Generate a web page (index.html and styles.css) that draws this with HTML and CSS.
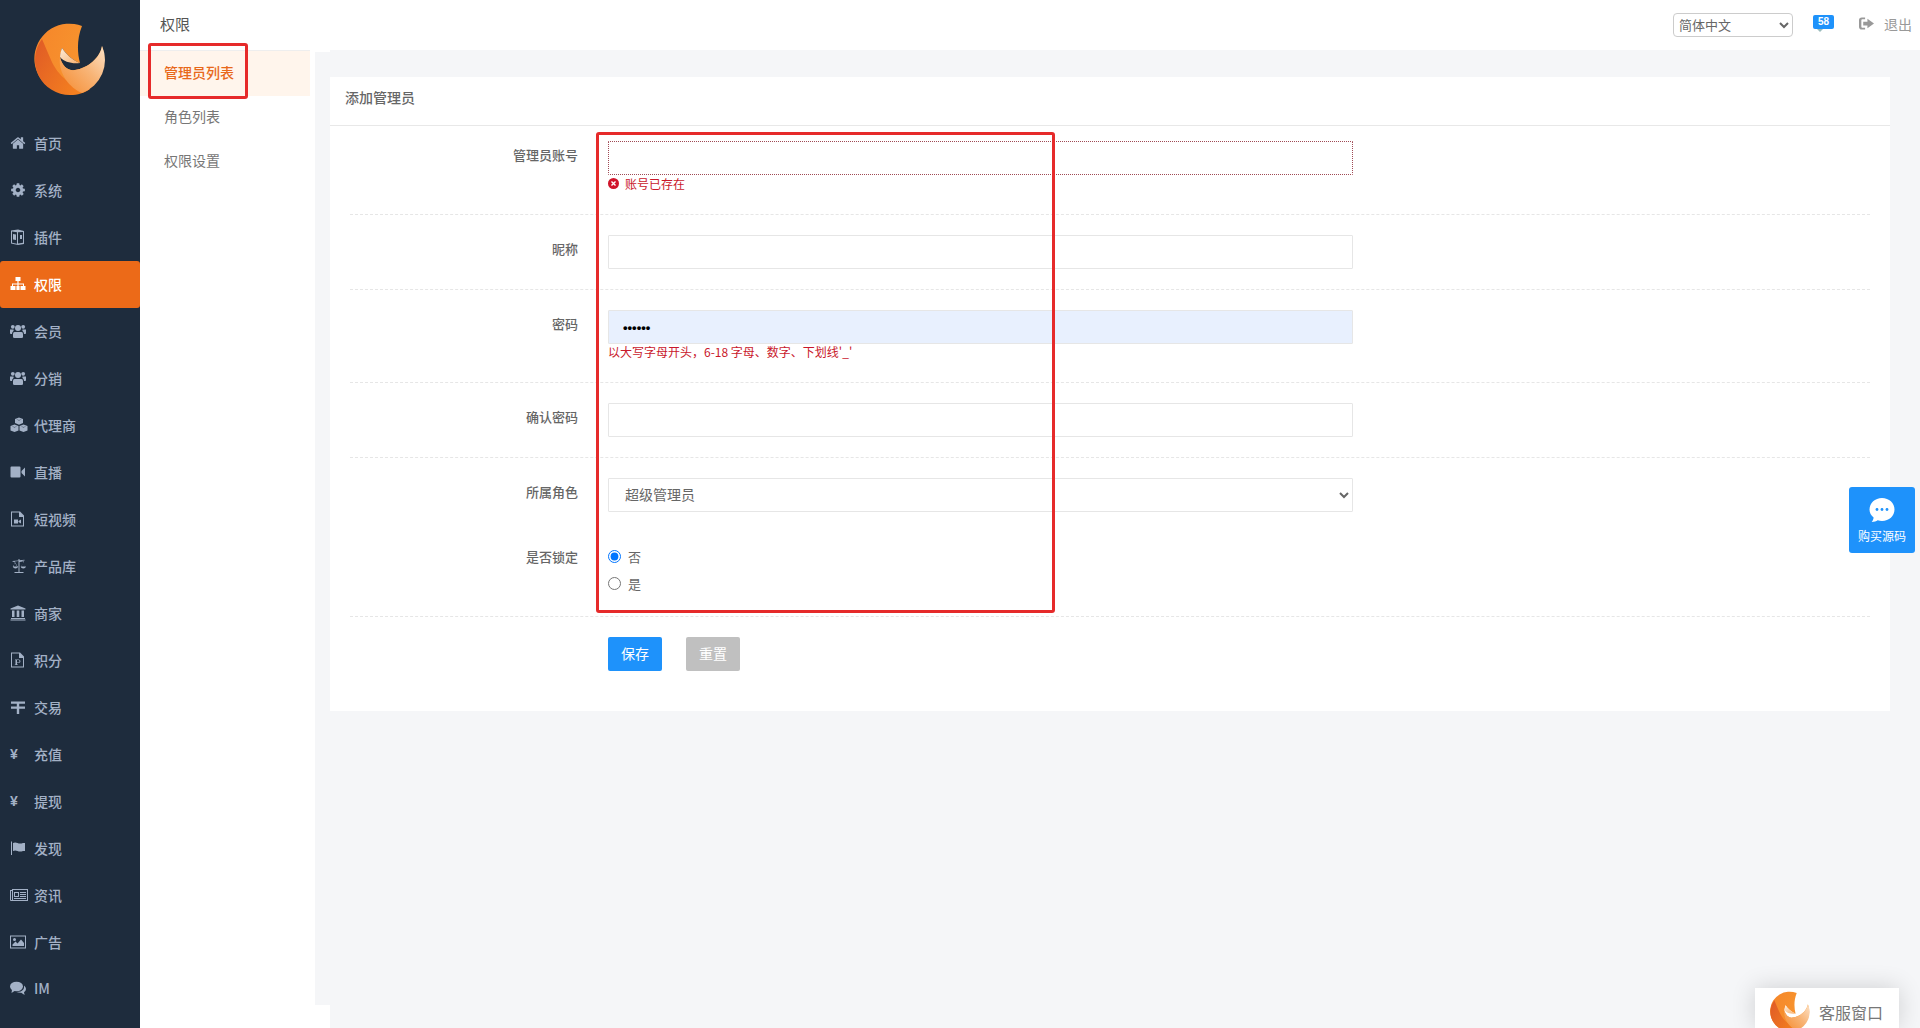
FILE: index.html
```html
<!DOCTYPE html>
<html lang="zh-CN">
<head>
  <meta charset="UTF-8">
  <meta name="viewport" content="width=device-width, initial-scale=1.0">
  <title>添加管理员</title>
  <link rel="stylesheet" href="styles.css">
</head>
<body>
  <svg class="svg-defs" aria-hidden="true">
    <defs>
      <linearGradient id="logoBase" x1="0" y1="0" x2="1" y2="0.3"><stop offset="0" stop-color="#f5852a"/><stop offset="1" stop-color="#f8982f"/></linearGradient>
      <linearGradient id="logoDark" x1="0" y1="0" x2="1" y2="0.6"><stop offset="0" stop-color="#df5a26"/><stop offset="1" stop-color="#f5811f"/></linearGradient>
      <linearGradient id="logoLight" x1="0" y1="1" x2="1" y2="0"><stop offset="0" stop-color="#f58a2e"/><stop offset="0.55" stop-color="#f8b476"/><stop offset="1" stop-color="#fde3c8"/></linearGradient>
      <linearGradient id="logoTip" x1="0" y1="0" x2="1" y2="1"><stop offset="0" stop-color="#fdeedd"/><stop offset="1" stop-color="#f8b06c"/></linearGradient>
      <symbol id="logo" viewBox="0 0 100 100">
        <path fill="url(#logoBase)" d="M62 16A35 35 0 1 0 82 36C80 48 68 58 55 60C48 61 42 56 40 47L42 38C46 44 52 50 60 53C57 42 57 28 62 16Z"/>
        <path fill="url(#logoDark)" d="M22 29A35 35 0 0 0 50 85C58 85 64 83 70 79C52 78 38 66 31 50C28 43 25 36 22 29Z"/>
        <path fill="url(#logoLight)" d="M82 36A35 35 0 0 1 62 83C50 78 38 64 40 47C42 56 48 61 55 60C68 58 80 48 82 36Z"/>
        <path fill="url(#logoTip)" d="M42 38C46 44 52 50 60 53C52 54 44 52 40 47C40 44 41 41 42 38Z"/>
      </symbol>
      <symbol id="i-home" viewBox="0 0 1792 1792" preserveAspectRatio="xMinYMid meet"><path d="M1472 992v480q0 26-19 45t-45 19h-384v-384h-256v384h-384q-26 0-45-19t-19-45v-480q0-1 .5-3t.5-3l575-474 575 474q1 2 1 6zm223-69l-62 74q-8 9-21 11h-3q-13 0-21-7l-692-577-692 577q-12 8-24 7-13-2-21-11l-62-74q-8-10-7-23.500t11-21.500l719-599q32-26 76-26t76 26l244 204v-195q0-14 9-23t23-9h192q14 0 23 9t9 23v408l219 182q10 8 11 21.500t-7 23.500z"/></symbol>
      <symbol id="i-cog" viewBox="0 0 1792 1792" preserveAspectRatio="xMinYMid meet"><path d="M1152 896q0-106-75-181t-181-75-181 75-75 181 75 181 181 75 181-75 75-181zm512-109v222q0 12-8 23t-20 13l-185 28q-19 54-39 91 35 50 107 138 10 12 10 25t-9 23q-27 37-99 108t-94 71q-12 0-26-9l-138-108q-44 23-91 38-16 136-29 186-7 28-36 28h-222q-14 0-24.500-8.500t-11.500-21.500l-28-184q-49-16-90-37l-141 107q-10 9-25 9-14 0-25-11-126-114-165-168-7-10-7-23 0-12 8-23 15-21 51-66.500t54-70.500q-27-50-41-99l-183-27q-13-2-21-12.500t-8-23.500v-222q0-12 8-23t19-13l186-28q14-46 39-92-40-57-107-138-10-12-10-24 0-10 9-23 26-36 98.500-107.500t94.500-71.500q13 0 26 10l138 107q44-23 91-38 16-136 29-186 7-28 36-28h222q14 0 24.500 8.500t11.500 21.500l28 184q49 16 90 37l142-107q9-9 24-9 13 0 25 10 129 119 165 170 7 8 7 22 0 12-8 23-15 21-51 66.500t-54 70.500q26 50 41 98l183 28q13 2 21 12.500t8 23.500z"/></symbol>
      <symbol id="i-plugin" viewBox="0 0 16 16" preserveAspectRatio="xMinYMid meet"><path fill-rule="evenodd" d="M1 1.500L8 .5l6 1.500v13l-6 1-7-1.500zM2 2.400v11.300l5 1V3.300zM8 3.300v11.300l5-.9V3zM3 5l3 .6v5.400l-3-.6zm7 1h2v4h-2z"/></symbol>
      <symbol id="i-sitemap" viewBox="0 0 16 16" preserveAspectRatio="xMinYMid meet"><path d="M5.500 1h5v4H8.600v2.500H14V10h1.500v4h-5v-4H13V8.500H8.600V10h1v4H6.400v-4h1V8.500H3V10h2.500v4h-5v-4H2V7.500h5.400V5H5.500z"/></symbol>
      <symbol id="i-users" viewBox="0 0 16 16" preserveAspectRatio="xMinYMid meet"><circle cx="8" cy="5" r="3"/><circle cx="2.800" cy="3.800" r="1.900"/><circle cx="13.200" cy="3.800" r="1.900"/><path d="M4.500 9h7q1.500 0 1.500 2v3q0 1-1.500 1h-7Q3 15 3 14v-3q0-2 1.500-2zM0 6.500h3.500Q4 8 3 8.500 2 9 2 11H.8Q0 11 0 10zM16 6.500h-3.500Q12 8 13 8.500q1 .5 1 2.500h1.200q.8 0 .8-1z"/></symbol>
      <symbol id="i-cubes" viewBox="0 0 18 16" preserveAspectRatio="xMinYMid meet"><path d="M9 .5l4 1.600v4L9 7.700 5 6.100v-4zM4.500 7.500l4 1.600v4.300l-4 1.600-4-1.600V9.100zM13.500 7.500l4 1.600v4.300l-4 1.600-4-1.600V9.100z"/><path fill="#1e2c3d" d="M6.400 2.600L9 3.600l2.600-1-.4-.2L9 3.100 6.800 2.400zM1.900 9.600l2.600 1 2.600-1-.4-.2-2.200.7-2.200-.7zM10.900 9.600l2.600 1 2.600-1-.4-.2-2.200.7-2.200-.7z"/></symbol>
      <symbol id="i-video" viewBox="0 0 16 16" preserveAspectRatio="xMinYMid meet"><path d="M.5 3.500q0-1 1-1h8q1 0 1 1v9q0 1-1 1h-8q-1 0-1-1zM11.500 7L15 3.500v9L11.500 9z"/></symbol>
      <symbol id="i-filevideo" viewBox="0 0 16 16" preserveAspectRatio="xMinYMid meet"><path fill-rule="evenodd" d="M1 .5h9l4 4v11H1zm1 1v13h11V6H9V1.500zm2 7h4v4H4zM8.500 10L11 8.500v4L8.500 11z"/></symbol>
      <symbol id="i-scale" viewBox="0 0 18 16" preserveAspectRatio="xMinYMid meet"><path d="M8.500 1h1v1.300l5-.6.100.7-2.300.4 3 5.700h.7q-.5 2-2.700 2t-2.700-2h.7l2.700-5.200-4.500.6V14h4v1h-9v-1h4V3.100l-3.800.5 2.800 4.900h.7q-.5 2-2.700 2t-2.700-2h.7L5 3.500l-2.400.3-.1-.7 6-.7zM5 5L2.800 8.500h4.300zm8.300-.3l-2.200 3.800h4.300z"/></symbol>
      <symbol id="i-bank" viewBox="0 0 16 16" preserveAspectRatio="xMinYMid meet"><path d="M8 .5l7.500 3v1H.5v-1zM2 5.500h2.500v6.500H2zM6.700 5.500h2.600v6.500H6.700zM11.500 5.500H14v6.500h-2.500zM1 13h14v1H1zM.5 14.500h15v1H.5z"/></symbol>
      <symbol id="i-fileppt" viewBox="0 0 16 16" preserveAspectRatio="xMinYMid meet"><path fill-rule="evenodd" d="M1 .5h9l4 4v11H1zm1 1v13h11V6H9V1.500zm3 6h3.500q2 0 2 1.800T8.500 11H7v1.500h1v.5H4.800v-.5h.7v-4.500H5zm2 .6V10.400h1.500q1 0 1-1.200t-1-1.100z"/></symbol>
      <symbol id="i-trade" viewBox="0 0 16 16" preserveAspectRatio="xMinYMid meet"><path d="M1 2.500h14v2.200H9.200v2.800H15v2.200H9.200V15H6.800V9.700H1V7.500h5.800V4.700H1z"/></symbol>
      <symbol id="i-flag" viewBox="0 0 16 16" preserveAspectRatio="xMinYMid meet"><path d="M1 1.500h1V15H1zM3 3q2-1 4.500 0t5.500 0h2v8h-2q-3 1-5.500 0T3 11z"/></symbol>
      <symbol id="i-news" viewBox="0 0 18 16" preserveAspectRatio="xMinYMid meet"><path fill-rule="evenodd" d="M0 3h2V2h16v12H1q-1 0-1-1zm3 0v10h14V3zm-2 1v9h1V4zm3 1h5v5H4zm1 1v3h3V6zm5-1h6v1h-6zm0 2h6v1h-6zm0 2h6v1h-6zM4 11h12v1H4z"/></symbol>
      <symbol id="i-picture" viewBox="0 0 16 16" preserveAspectRatio="xMinYMid meet"><path fill-rule="evenodd" d="M0 1.500h16v13H0zm1 1v11h14v-11zM2.500 12V10.500l3-3 2 2 3.500-4 3 3.500V12zM4.500 4A1.500 1.500 0 1 1 4.500 7 1.500 1.500 0 0 1 4.500 4z"/></symbol>
      <symbol id="i-comments" viewBox="0 0 16 16" preserveAspectRatio="xMinYMid meet"><ellipse cx="6.500" cy="6.500" rx="6.500" ry="4.800"/><path d="M2 9.500L1.500 13 6 10zM14 5.500Q16 7 16 9q0 2-2 3.200l.6 2.800-3.400-2.200Q8.500 13 6.500 12q5 0 6.800-2.500 1-2 .7-4z"/></symbol>
      <symbol id="i-logout" viewBox="0 0 16 16"><path d="M6.500 1.500v2H3.500q-1 0-1 1v7q0 1 1 1h3v2H3q-3 0-3-3v-7q0-3 3-3zM9 3l7 5-7 5v-3H4.500V6H9z"/></symbol>
      <symbol id="i-error" viewBox="0 0 12 12"><circle cx="6" cy="6" r="6" fill="#d0152b"/><path stroke="#fff" stroke-width="1.500" d="M3.800 3.800l4.400 4.400M8.200 3.800l-4.400 4.400"/></symbol>
    </defs>
  </svg>

  <div class="app">
    <aside class="sidebar">
      <div class="logo-box"><svg class="logo"><use href="#logo"/></svg></div>
      <ul class="menu">
        <li class="menu-item"><span class="menu-icon"><svg><use href="#i-home"/></svg></span>首页</li>
        <li class="menu-item"><span class="menu-icon"><svg><use href="#i-cog"/></svg></span>系统</li>
        <li class="menu-item"><span class="menu-icon"><svg><use href="#i-plugin"/></svg></span>插件</li>
        <li class="menu-item active"><span class="menu-icon"><svg><use href="#i-sitemap"/></svg></span>权限</li>
        <li class="menu-item"><span class="menu-icon"><svg><use href="#i-users"/></svg></span>会员</li>
        <li class="menu-item"><span class="menu-icon"><svg><use href="#i-users"/></svg></span>分销</li>
        <li class="menu-item"><span class="menu-icon"><svg><use href="#i-cubes"/></svg></span>代理商</li>
        <li class="menu-item"><span class="menu-icon"><svg><use href="#i-video"/></svg></span>直播</li>
        <li class="menu-item"><span class="menu-icon"><svg><use href="#i-filevideo"/></svg></span>短视频</li>
        <li class="menu-item"><span class="menu-icon"><svg><use href="#i-scale"/></svg></span>产品库</li>
        <li class="menu-item"><span class="menu-icon"><svg><use href="#i-bank"/></svg></span>商家</li>
        <li class="menu-item"><span class="menu-icon"><svg><use href="#i-fileppt"/></svg></span>积分</li>
        <li class="menu-item"><span class="menu-icon"><svg><use href="#i-trade"/></svg></span>交易</li>
        <li class="menu-item"><span class="menu-icon">¥</span>充值</li>
        <li class="menu-item"><span class="menu-icon">¥</span>提现</li>
        <li class="menu-item"><span class="menu-icon"><svg><use href="#i-flag"/></svg></span>发现</li>
        <li class="menu-item"><span class="menu-icon"><svg><use href="#i-news"/></svg></span>资讯</li>
        <li class="menu-item"><span class="menu-icon"><svg><use href="#i-picture"/></svg></span>广告</li>
        <li class="menu-item item-latin"><span class="menu-icon"><svg><use href="#i-comments"/></svg></span>IM</li>
      </ul>
    </aside>

    <div class="right">
      <header class="topbar">
        <div class="top-title">权限</div>
        <div class="top-tools">
          <select class="lang"><option>简体中文</option></select>
          <span class="msg-badge">58</span>
          <span class="logout"><svg><use href="#i-logout"/></svg>退出</span>
        </div>
      </header>

      <div class="body">
        <nav class="subnav">
          <a class="subnav-item active">管理员列表</a>
          <a class="subnav-item">角色列表</a>
          <a class="subnav-item">权限设置</a>
        </nav>
        <div class="gutter"></div>
        <main class="main">
          <section class="card">
            <h2 class="card-title">添加管理员</h2>
            <form class="form">
              <div class="row row-first">
                <label class="row-label">管理员账号</label>
                <div class="row-field">
                  <input class="input input-error" type="text">
                  <div class="msg-error"><svg><use href="#i-error"/></svg>账号已存在</div>
                </div>
              </div>
              <div class="row">
                <label class="row-label">昵称</label>
                <div class="row-field"><input class="input" type="text"></div>
              </div>
              <div class="row row-hint">
                <label class="row-label">密码</label>
                <div class="row-field">
                  <input class="input input-filled" type="password" value="123456">
                  <div class="msg-hint">以大写字母开头，6-18 字母、数字、下划线'_'</div>
                </div>
              </div>
              <div class="row">
                <label class="row-label">确认密码</label>
                <div class="row-field"><input class="input" type="password"></div>
              </div>
              <div class="row row-plain">
                <label class="row-label">所属角色</label>
                <div class="row-field">
                  <select class="input select"><option>超级管理员</option></select>
                </div>
              </div>
              <div class="row row-radio">
                <label class="row-label">是否锁定</label>
                <div class="row-field">
                  <label class="radio"><input type="radio" name="locked" checked>否</label>
                  <label class="radio"><input type="radio" name="locked">是</label>
                </div>
              </div>
              <div class="actions">
                <button type="button" class="btn btn-save">保存</button>
                <button type="button" class="btn btn-reset">重置</button>
              </div>
            </form>
          </section>
        </main>
      </div>
    </div>
  </div>

  <div class="mark mark-nav"></div>
  <div class="mark mark-form"></div>

  <div class="buy">
    <svg viewBox="0 0 26 26"><path fill="#fff" d="M13 1c7 0 12.500 5 12.500 11.500S20 24 13 24c-1.500 0-3-.2-4.300-.7-1.500 1-3.500 1.700-6 1.700 1-1.200 1.800-2.800 1.900-4.500C2 18.500.5 15.700.5 12.500.5 6 6 1 13 1z"/><circle cx="8" cy="12.500" r="1.400" fill="#1e92fb"/><circle cx="13" cy="12.500" r="1.400" fill="#1e92fb"/><circle cx="18" cy="12.500" r="1.400" fill="#1e92fb"/></svg>
    <span>购买源码</span>
  </div>

  <div class="service">
    <svg class="service-logo"><use href="#logo"/></svg>
    <span>客服窗口</span>
  </div>
</body>
</html>
```

FILE: styles.css
```css
* {
  box-sizing: border-box;
}
html, body {
  margin: 0;
  height: 100%;
  overflow: hidden;
}
body {
  font-family: "Noto Sans CJK SC", "Liberation Sans", sans-serif;
  font-size: 13px;
  color: #666;
  background-color: #fff;
}
.svg-defs {
  position: absolute;
  width: 0;
  height: 0;
}
.app {
  display: flex;
  height: 1028px;
}

/* sidebar */
.sidebar {
  width: 140px;
  flex: none;
  background-color: #1e2c3d;
}
.logo-box {
  height: 120px;
  padding: 10px 21px 10px 20px;
}
.logo {
  display: block;
  width: 100px;
  height: 100px;
}
.menu {
  list-style: none;
  margin: 0;
  padding: 0;
}
.menu-item {
  display: flex;
  align-items: center;
  height: 47px;
  padding: 0 0 2px 10px;
  font-size: 14px;
  font-weight: 500;
  color: #a3b1c6;
}
.menu-item.active {
  color: #fff;
  background-color: #ec6a18;
  border-radius: 3px;
}
.item-latin {
  padding-bottom: 4px;
}
.menu-icon {
  width: 24px;
  flex: none;
  font-size: 14px;
  font-weight: 700;
  font-family: "Liberation Sans", sans-serif;
}
.menu-icon svg {
  display: block;
  width: 18px;
  height: 16px;
  fill: currentColor;
}

/* top */
.right {
  flex: 1;
  display: flex;
  flex-direction: column;
  min-width: 0;
}
.topbar {
  display: flex;
  align-items: center;
  justify-content: space-between;
  height: 50px;
  flex: none;
  padding: 0 8px 0 20px;
  background-color: #fff;
}
.top-title {
  margin-bottom: 3px;
  font-size: 15px;
  color: #555;
}
.top-tools {
  display: flex;
  align-items: center;
}
.lang {
  width: 120px;
  height: 24px;
  padding: 0 0 4px 1px;
  font-family: inherit;
  font-size: 13px;
  color: #666;
  background-color: #fff;
  border: 1px solid #ccc;
  border-radius: 4px;
}
.msg-badge {
  position: relative;
  width: 21px;
  height: 14px;
  margin: -6px 25px 0 20px;
  font-family: "Liberation Sans", sans-serif;
  font-size: 10px;
  font-weight: 700;
  line-height: 14px;
  text-align: center;
  color: #fff;
  background-color: #1e92fb;
  border-radius: 2px;
}
.msg-badge::after {
  content: "";
  position: absolute;
  left: 4px;
  top: 14px;
  border: 3px solid transparent;
  border-top-color: #9bb;
}
.logout {
  display: flex;
  align-items: center;
  gap: 10px;
  margin-bottom: 3px;
  font-size: 14px;
  color: #999;
}
.logout svg {
  width: 15px;
  height: 15px;
  fill: #999;
}

/* second column */
.body {
  flex: 1;
  display: flex;
  min-height: 0;
}
.subnav {
  width: 170px;
  flex: none;
  margin-right: 5px;
  border-top: 1px solid #eee;
}
.subnav-item {
  display: flex;
  align-items: center;
  height: 44px;
  padding: 0 0 5px 24px;
  font-size: 14px;
  color: #777;
}
.subnav-item.active {
  height: 45px;
  padding-bottom: 3px;
  color: #e8681a;
  font-weight: 500;
  background-color: #fff5ec;
}
.gutter {
  width: 15px;
  height: 953px;
  flex: none;
  margin-top: 2px;
  background-color: #f5f6f8;
}

/* form */
.main {
  flex: 1;
  min-width: 0;
  padding: 27px 30px 0 0;
  background-color: #f5f6f8;
}
.card {
  height: 634px;
  background-color: #fff;
}
.card-title {
  height: 49px;
  margin: 0;
  padding-left: 15px;
  font-size: 14px;
  font-weight: 500;
  line-height: 40px;
  color: #666;
  border-bottom: 1px solid #e8e8e8;
}
.form {
  display: block;
}
.row {
  display: flex;
  margin: 0 20px;
  padding: 20px 0;
  border-bottom: 1px dashed #e6e6e6;
}
.row-first {
  padding: 15px 0 23px;
}
.row-hint {
  padding-bottom: 22px;
}
.row-plain {
  border-bottom: 0;
  padding-bottom: 0;
}
.row-radio {
  padding: 31px 0 19px;
}
.row-label {
  width: 228px;
  flex: none;
  font-weight: 500;
  line-height: 28px;
  text-align: right;
  color: #666;
}
.row-radio .row-label {
  line-height: 27px;
}
.row-field {
  width: 745px;
  margin-left: 30px;
}
.input {
  display: block;
  width: 745px;
  height: 34px;
  padding: 0 14px;
  font-family: inherit;
  font-size: 13px;
  color: #333;
  background-color: #fff;
  border: 1px solid #e6e6e6;
  border-radius: 1px;
  outline: none;
}
.input-error {
  border: 1px dotted #a04a55;
}
.input-filled {
  font-family: "Liberation Sans", sans-serif;
  font-weight: 700;
  color: #000;
  background-color: #e8f0fe;
}
.select {
  padding: 0 0 2px 12px;
  font-size: 14px;
  color: #666;
}
.msg-error {
  display: flex;
  align-items: center;
  gap: 6px;
  height: 16px;
  font-size: 12px;
  color: #c9182b;
}
.msg-error svg {
  width: 11px;
  height: 11px;
}
.msg-hint {
  height: 16px;
  font-size: 12px;
  line-height: 16px;
  color: #c9182b;
}
.radio {
  display: flex;
  align-items: center;
  height: 26px;
  margin-bottom: 1px;
  font-size: 13px;
  color: #666;
}
.radio input {
  width: 13px;
  height: 13px;
  margin: 0 7px 0 0;
}
.actions {
  display: flex;
  gap: 24px;
  padding: 20px 0 0 278px;
}
.btn {
  width: 54px;
  height: 34px;
  padding: 0 0 3px;
  font-family: inherit;
  font-size: 14px;
  color: #fff;
  border: 0;
  border-radius: 2px;
}
.btn-save {
  background-color: #1e92fb;
}
.btn-reset {
  background-color: #c0c0c0;
}

/* things lying over the page */
.mark {
  position: absolute;
  border: 3px solid #e62a2a;
  border-radius: 3px;
}
.mark-nav {
  left: 148px;
  top: 43px;
  width: 100px;
  height: 56px;
}
.mark-form {
  left: 596px;
  top: 132px;
  width: 459px;
  height: 481px;
}
.buy {
  position: absolute;
  left: 1849px;
  top: 487px;
  display: flex;
  flex-direction: column;
  align-items: center;
  width: 66px;
  height: 66px;
  padding-top: 10px;
  font-size: 12px;
  color: #fff;
  background-color: #1e92fb;
  border-radius: 3px;
}
.buy svg {
  width: 26px;
  height: 26px;
  margin-bottom: 4px;
}
.service {
  position: absolute;
  left: 1755px;
  top: 988px;
  display: flex;
  align-items: flex-start;
  width: 144px;
  height: 40px;
  padding-left: 7px;
  font-size: 16px;
  color: #777;
  background-color: #fff;
  box-shadow: 0 0 24px rgba(0, 0, 0, 0.16);
}
.service span {
  margin: 12px 0 0 1px;
  line-height: 24px;
}
.service-logo {
  width: 56px;
  height: 56px;
  margin-top: -4px;
  flex: none;
}
```
